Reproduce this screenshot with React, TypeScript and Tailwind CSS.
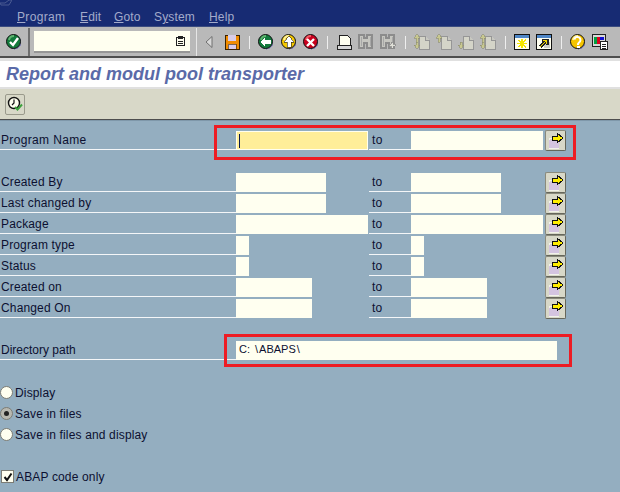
import type { ReactNode } from "react"

const font = "font-['Liberation_Sans',Arial,sans-serif]"

// Toolbar icons, all 16x16 pixel-style drawings
function Ico({ children, className = "" }: { children: ReactNode; className?: string }) {
  return (
    <svg viewBox="0 0 16 16" width="16" height="16" shapeRendering="crispEdges" className={"shrink-0 " + className}>
      {children}
    </svg>
  )
}

function Round({ fill, rim, children }: { fill: string; rim: string; children: ReactNode }) {
  return (
    <Ico>
      <circle cx="8.5" cy="8.5" r="7" fill="#8a8ab8" />
      <circle cx="7.5" cy="7.5" r="7" fill={fill} stroke="#111" strokeWidth="1" shapeRendering="auto" />
      <path d="M3 6a5 5 0 0 1 5-4" stroke={rim} strokeWidth="2" fill="none" shapeRendering="auto" />
      {children}
    </Ico>
  )
}

function Binoculars({ plus }: { plus?: boolean }) {
  return (
    <Ico>
      <path d="M1 1h5v3h3V1h5v13H9V9H6v5H1z" fill="#c6c6c0" stroke="#8c8c8c" strokeWidth="1.4" />
      <path d="M3 3v9M12 3v9" stroke="#a8a8a8" strokeWidth="1" />
      {plus && <path d="M11 8h2v2h2v2h-2v2h-2v-2H9v-2h2z" fill="#e0e0d8" stroke="#8c8c8c" strokeWidth="0.8" />}
    </Ico>
  )
}

function Page({ kind }: { kind: "first" | "prev" | "next" | "last" }) {
  const up = kind === "first" || kind === "prev"
  const down = kind === "next" || kind === "last"
  return (
    <Ico>
      <path d="M5 2h6l4 4v9H5z" fill="#d4d4c8" stroke="#969696" />
      <path d="M11 2v4h4" fill="#c8c8c0" stroke="#969696" />
      {(up || kind === "last") && <path d="M3 0l3 4H4v4H2V4H0z" fill="#c8c890" stroke="#8c8c70" strokeWidth="0.6" />}
      {(down || kind === "first") && <path d="M3 15l3-4H4V8H2v3H0z" fill="#c8c890" stroke="#8c8c70" strokeWidth="0.6" />}
    </Ico>
  )
}

function Sep() {
  return <div className="w-px h-[13px] bg-[#eeeeee] shrink-0" />
}

function WindowIcon({ children }: { children: ReactNode }) {
  return (
    <Ico>
      <rect x="0.5" y="0.5" width="15" height="15" fill="#fffff0" stroke="#111" />
      <rect x="1" y="1" width="14" height="3" fill="#4f86c6" />
      {children}
    </Ico>
  )
}

function ArrowButton() {
  return (
    <button className="w-[21px] h-[21px] shrink-0 bg-[#d8d8c8] border border-[#8a8a7c] border-r-[#66665a] border-b-[#66665a] rounded-[2px] relative">
      <svg viewBox="0 0 19 19" width="19" height="19" shapeRendering="crispEdges" className="absolute left-0 top-0">
        <rect x="3" y="9" width="10" height="8" fill="#d4c4e0" />
        <path d="M3 9V7h6M3 17h10" stroke="#f2f2ea" strokeWidth="1" fill="none" />
        <path d="M6 5h5V2l6 5-6 5V9H6z" fill="#ffee00" stroke="#111" strokeWidth="1" />
      </svg>
    </button>
  )
}

function Field({ w, active, children }: { w: string; active?: boolean; children?: ReactNode }) {
  return (
    <div className={"h-[19px] flex items-center " + w + (active ? " bg-[#ffee99] border border-[#fffff0]" : " bg-[#fffff0]")}>
      {children}
    </div>
  )
}

function RangeRow({ label, w1, w2, active, className = "" }: { label: string; w1: string; w2: string; active?: boolean; className?: string }) {
  return (
    <div className={"flex items-center h-[21px] " + className}>
      <div className="w-[236px] h-[19px] border-b border-[#f4f6f8] pl-px leading-[19px]">{label}</div>
      <div className="w-[133px]">
        <Field w={w1} active={active}>
          {active && <div className="w-px h-[14px] ml-[2px] bg-[#0a1a50]" />}
        </Field>
      </div>
      <div className="w-[42px] h-[19px] border-b border-[#f4f6f8] pl-[3px] leading-[19px]">to</div>
      <div className="w-[134px]">
        <Field w={w2} />
      </div>
      <ArrowButton />
    </div>
  )
}

function Radio({ label, on }: { label: string; on?: boolean }) {
  return (
    <div className="flex items-center h-[21px]">
      <div className={"w-[13px] h-[13px] rounded-full border border-[#7c7c74] flex items-center justify-center mr-[2px] " + (on ? "bg-[#b8b8b0]" : "bg-[#fffff0]")}>
        {on && <div className="w-[5px] h-[5px] rounded-full bg-[#222]" />}
      </div>
      <span>{label}</span>
    </div>
  )
}

const rows = [
  { label: "Created By", w1: "w-[90px]", w2: "w-[90px]" },
  { label: "Last changed by", w1: "w-[90px]", w2: "w-[90px]" },
  { label: "Package", w1: "w-[132px]", w2: "w-[132px]" },
  { label: "Program type", w1: "w-[13px]", w2: "w-[13px]" },
  { label: "Status", w1: "w-[13px]", w2: "w-[13px]" },
  { label: "Created on", w1: "w-[76px]", w2: "w-[76px]" },
  { label: "Changed On", w1: "w-[76px]", w2: "w-[76px]" },
]

export default function App() {
  return (
    <div className={"relative w-[620px] h-[492px] overflow-hidden flex flex-col bg-[#94aec0] text-[12px] text-[#0c1030] tracking-[0.15px] " + font}>
      {/* Menu bar */}
      <div className="h-[27px] bg-[#172b73] border-b border-[#3b4c80] flex items-center pl-[17px] pt-[8px] text-[#a3abcb] shrink-0 relative">
        <svg viewBox="0 0 12 6" width="12" height="6" className="absolute left-0 top-0">
          <path d="M0 3h5L9 0h3L9 5H1z" fill="none" stroke="#4a5b92" strokeWidth="1" />
        </svg>
        <span className="w-[63px] tracking-[0.35px]"><u>P</u>rogram</span>
        <span className="w-[34px]"><u>E</u>dit</span>
        <span className="w-[40px]"><u>G</u>oto</span>
        <span className="w-[55px]">S<u>y</u>stem</span>
        <span><u>H</u>elp</span>
      </div>

      {/* System toolbar */}
      <div className="h-[31px] bg-[#b9b9b9] border-b-2 border-[#4e4e4e] flex items-center pt-px shrink-0">
        <div className="w-[30px] h-full border-r-2 border-[#6f6f6f] flex items-center pl-[6px] shrink-0">
          <Round fill="#127a3c" rim="#5fb36f">
            <path d="M4 8l3 3 5-7" stroke="#fff" strokeWidth="2.4" fill="none" shapeRendering="auto" />
          </Round>
        </div>
        <div className="w-[167px] h-full flex items-center pl-[4px] border-r border-[#e6e6e6] shrink-0">
          <div className="w-[156px] h-[22px] bg-[#fffff0] border-b-2 border-[#969696] flex items-center justify-end pr-[5px]">
            <svg viewBox="0 0 9 10" width="9" height="10" shapeRendering="crispEdges">
              <rect x="0.5" y="1.5" width="8" height="8" fill="#fffff0" stroke="#222" />
              <rect x="2" y="0" width="5" height="3" fill="#222" />
              <path d="M2 5h5M2 7h5" stroke="#222" />
            </svg>
          </div>
        </div>
        <div className="w-[8px] h-[12px] ml-[8px] shrink-0">
          <svg viewBox="0 0 8 12" width="8" height="12">
            <path d="M7 0.5v11L1 6z" fill="#d8d8d8" stroke="#707070" />
          </svg>
        </div>
        <Ico className="ml-[11px]">
          <path d="M1 1h14v14H1z" fill="#f08c00" stroke="#3a2200" />
          <rect x="4" y="1" width="8" height="6" fill="#d8cce8" />
          <rect x="4" y="10" width="8" height="5" fill="#d8cce8" stroke="#3a2200" strokeWidth="0.6" />
        </Ico>
        <div className="ml-[9px]"><Sep /></div>
        <div className="ml-[8px]">
          <Round fill="#127a3c" rim="#5fb36f">
            <path d="M2 8l5-5v3h6v4H7v3z" fill="#fff" />
          </Round>
        </div>
        <div className="ml-[7px]">
          <Round fill="#f5c800" rim="#fff39a">
            <path d="M8 2l5 6h-3v5H6V8H3z" fill="#fff" stroke="#222" strokeWidth="0.6" />
          </Round>
        </div>
        <div className="ml-[6px]">
          <Round fill="#c8001e" rim="#f25a64">
            <path d="M4 5l7 7M11 5l-7 7" stroke="#fff" strokeWidth="2.4" shapeRendering="auto" />
          </Round>
        </div>
        <div className="ml-[8px]"><Sep /></div>
        <Ico className="ml-[8px]">
          <path d="M3 1h8l3 3v7H3z" fill="#fffff0" stroke="#222" />
          <rect x="1" y="11" width="14" height="4" fill="#d8d8d8" stroke="#222" />
        </Ico>
        <div className="ml-[6px]"><Binoculars /></div>
        <div className="ml-[6px]"><Binoculars plus /></div>
        <div className="ml-[9px]"><Sep /></div>
        <div className="ml-[8px]"><Page kind="first" /></div>
        <div className="ml-[6px]"><Page kind="prev" /></div>
        <div className="ml-[6px]"><Page kind="next" /></div>
        <div className="ml-[6px]"><Page kind="last" /></div>
        <div className="ml-[9px]"><Sep /></div>
        <div className="ml-[8px]">
          <WindowIcon>
            <path d="M8 5v9M4 6l8 7M12 6l-8 7M3 9.5h10" stroke="#f5e600" strokeWidth="1.4" />
          </WindowIcon>
        </div>
        <div className="ml-[6px]">
          <WindowIcon>
            <rect x="8" y="8" width="6" height="6" fill="#d0d0c8" />
            <path d="M4 13l6-6M6 6h5v5" stroke="#222" strokeWidth="3" fill="none" />
            <path d="M4 13l6-6M7 6.5h3.5v3.5" stroke="#f5d800" strokeWidth="1.4" fill="none" />
          </WindowIcon>
        </div>
        <div className="ml-[9px]"><Sep /></div>
        <div className="ml-[8px]">
          <Round fill="#f5c400" rim="#fff39a">
            <path d="M4.5 5.5a3 3 0 1 1 4.5 3L8 10v1" stroke="#fff" strokeWidth="2" fill="none" shapeRendering="auto" />
            <rect x="6.5" y="12" width="3" height="2" fill="#fff" />
          </Round>
        </div>
        <Ico className="ml-[6px]">
          <rect x="0.5" y="0.5" width="13" height="12" fill="#d8d8d8" stroke="#222" />
          <rect x="2" y="3" width="3" height="7" fill="#00a040" />
          <rect x="5" y="3" width="3" height="7" fill="#e00020" />
          <rect x="8" y="3" width="4" height="3" fill="#1010d0" />
          <rect x="8.5" y="7.5" width="7" height="8" fill="#fff" stroke="#222" />
          <path d="M10 10h4M10 12h4M10 14h4" stroke="#222" />
        </Ico>
      </div>

      {/* Title */}
      <div className="h-[31px] border-t-[3px] border-[#e0e0e0] border-b-2 bg-white flex items-center pl-[6px] shrink-0">
        <span className="text-[18px] font-bold italic text-[#5a6aa8] tracking-normal leading-none">Report and modul pool transporter</span>
      </div>

      {/* Application toolbar */}
      <div className="h-[31px] bg-[#d8d8c8] border-b border-[#4e4e4e] flex items-center pl-[5px] shrink-0">
        <button className="w-[20px] h-[21px] bg-[#d8d8c8] border border-[#9a9a8c] rounded-[2px] flex items-center justify-center">
          <svg viewBox="0 0 16 16" width="16" height="16">
            <circle cx="7" cy="7" r="5.5" fill="#fffff0" stroke="#111" strokeWidth="1.4" />
            <path d="M7 3.5V7l-2 2" stroke="#111" strokeWidth="1.2" fill="none" />
            <path d="M8 11l2.5 2.5L15 8.5" stroke="#3da03d" strokeWidth="2" fill="none" />
          </svg>
        </button>
      </div>

      {/* Form */}
      <div className="flex-1 flex flex-col pt-[9px] border-t border-[#7f98aa]">
        <RangeRow label="Program Name" w1="w-[132px]" w2="w-[132px]" active className="tracking-[0.35px]" />
        <div className="h-[21px]" />
        {rows.map((r) => (
          <RangeRow key={r.label} label={r.label} w1={r.w1} w2={r.w2} />
        ))}
        <div className="flex items-center h-[21px] mt-[21px]">
          <div className="w-[236px] h-[19px] border-b border-[#f4f6f8] pl-px leading-[19px] tracking-normal">Directory path</div>
          <div className="w-[321px] h-[19px] bg-[#fffff0] pl-[3px] leading-[17px] text-[11px] tracking-normal flex">
            <span>C</span>
            <span>:</span>
            <span className="ml-[5px]">\</span>
            <span className="ml-px">ABAPS</span>
            <span className="ml-px">\</span>
          </div>
        </div>
        <div className="mt-[21px]">
          <Radio label="Display" />
          <Radio label="Save in files" on />
          <Radio label="Save in files and display" />
        </div>
        <div className="flex items-center h-[21px] mt-[21px]">
          <div className="w-[13px] h-[13px] ml-px mr-[2px] bg-[#fffff0] border border-[#7c7c74] flex items-center justify-center">
            <svg viewBox="0 0 10 10" width="10" height="10">
              <path d="M1.5 5l2.5 3 4.5-6.5" stroke="#111" strokeWidth="2" fill="none" />
            </svg>
          </div>
          <span>ABAP code only</span>
        </div>
      </div>

      {/* Red highlight boxes drawn over the form */}
      <div className="absolute left-[214px] top-[125px] w-[362px] h-[35px] border-[3px] border-[#ed1c24]" />
      <div className="absolute left-[224px] top-[334px] w-[348px] h-[33px] border-[3px] border-[#ed1c24]" />
    </div>
  )
}
